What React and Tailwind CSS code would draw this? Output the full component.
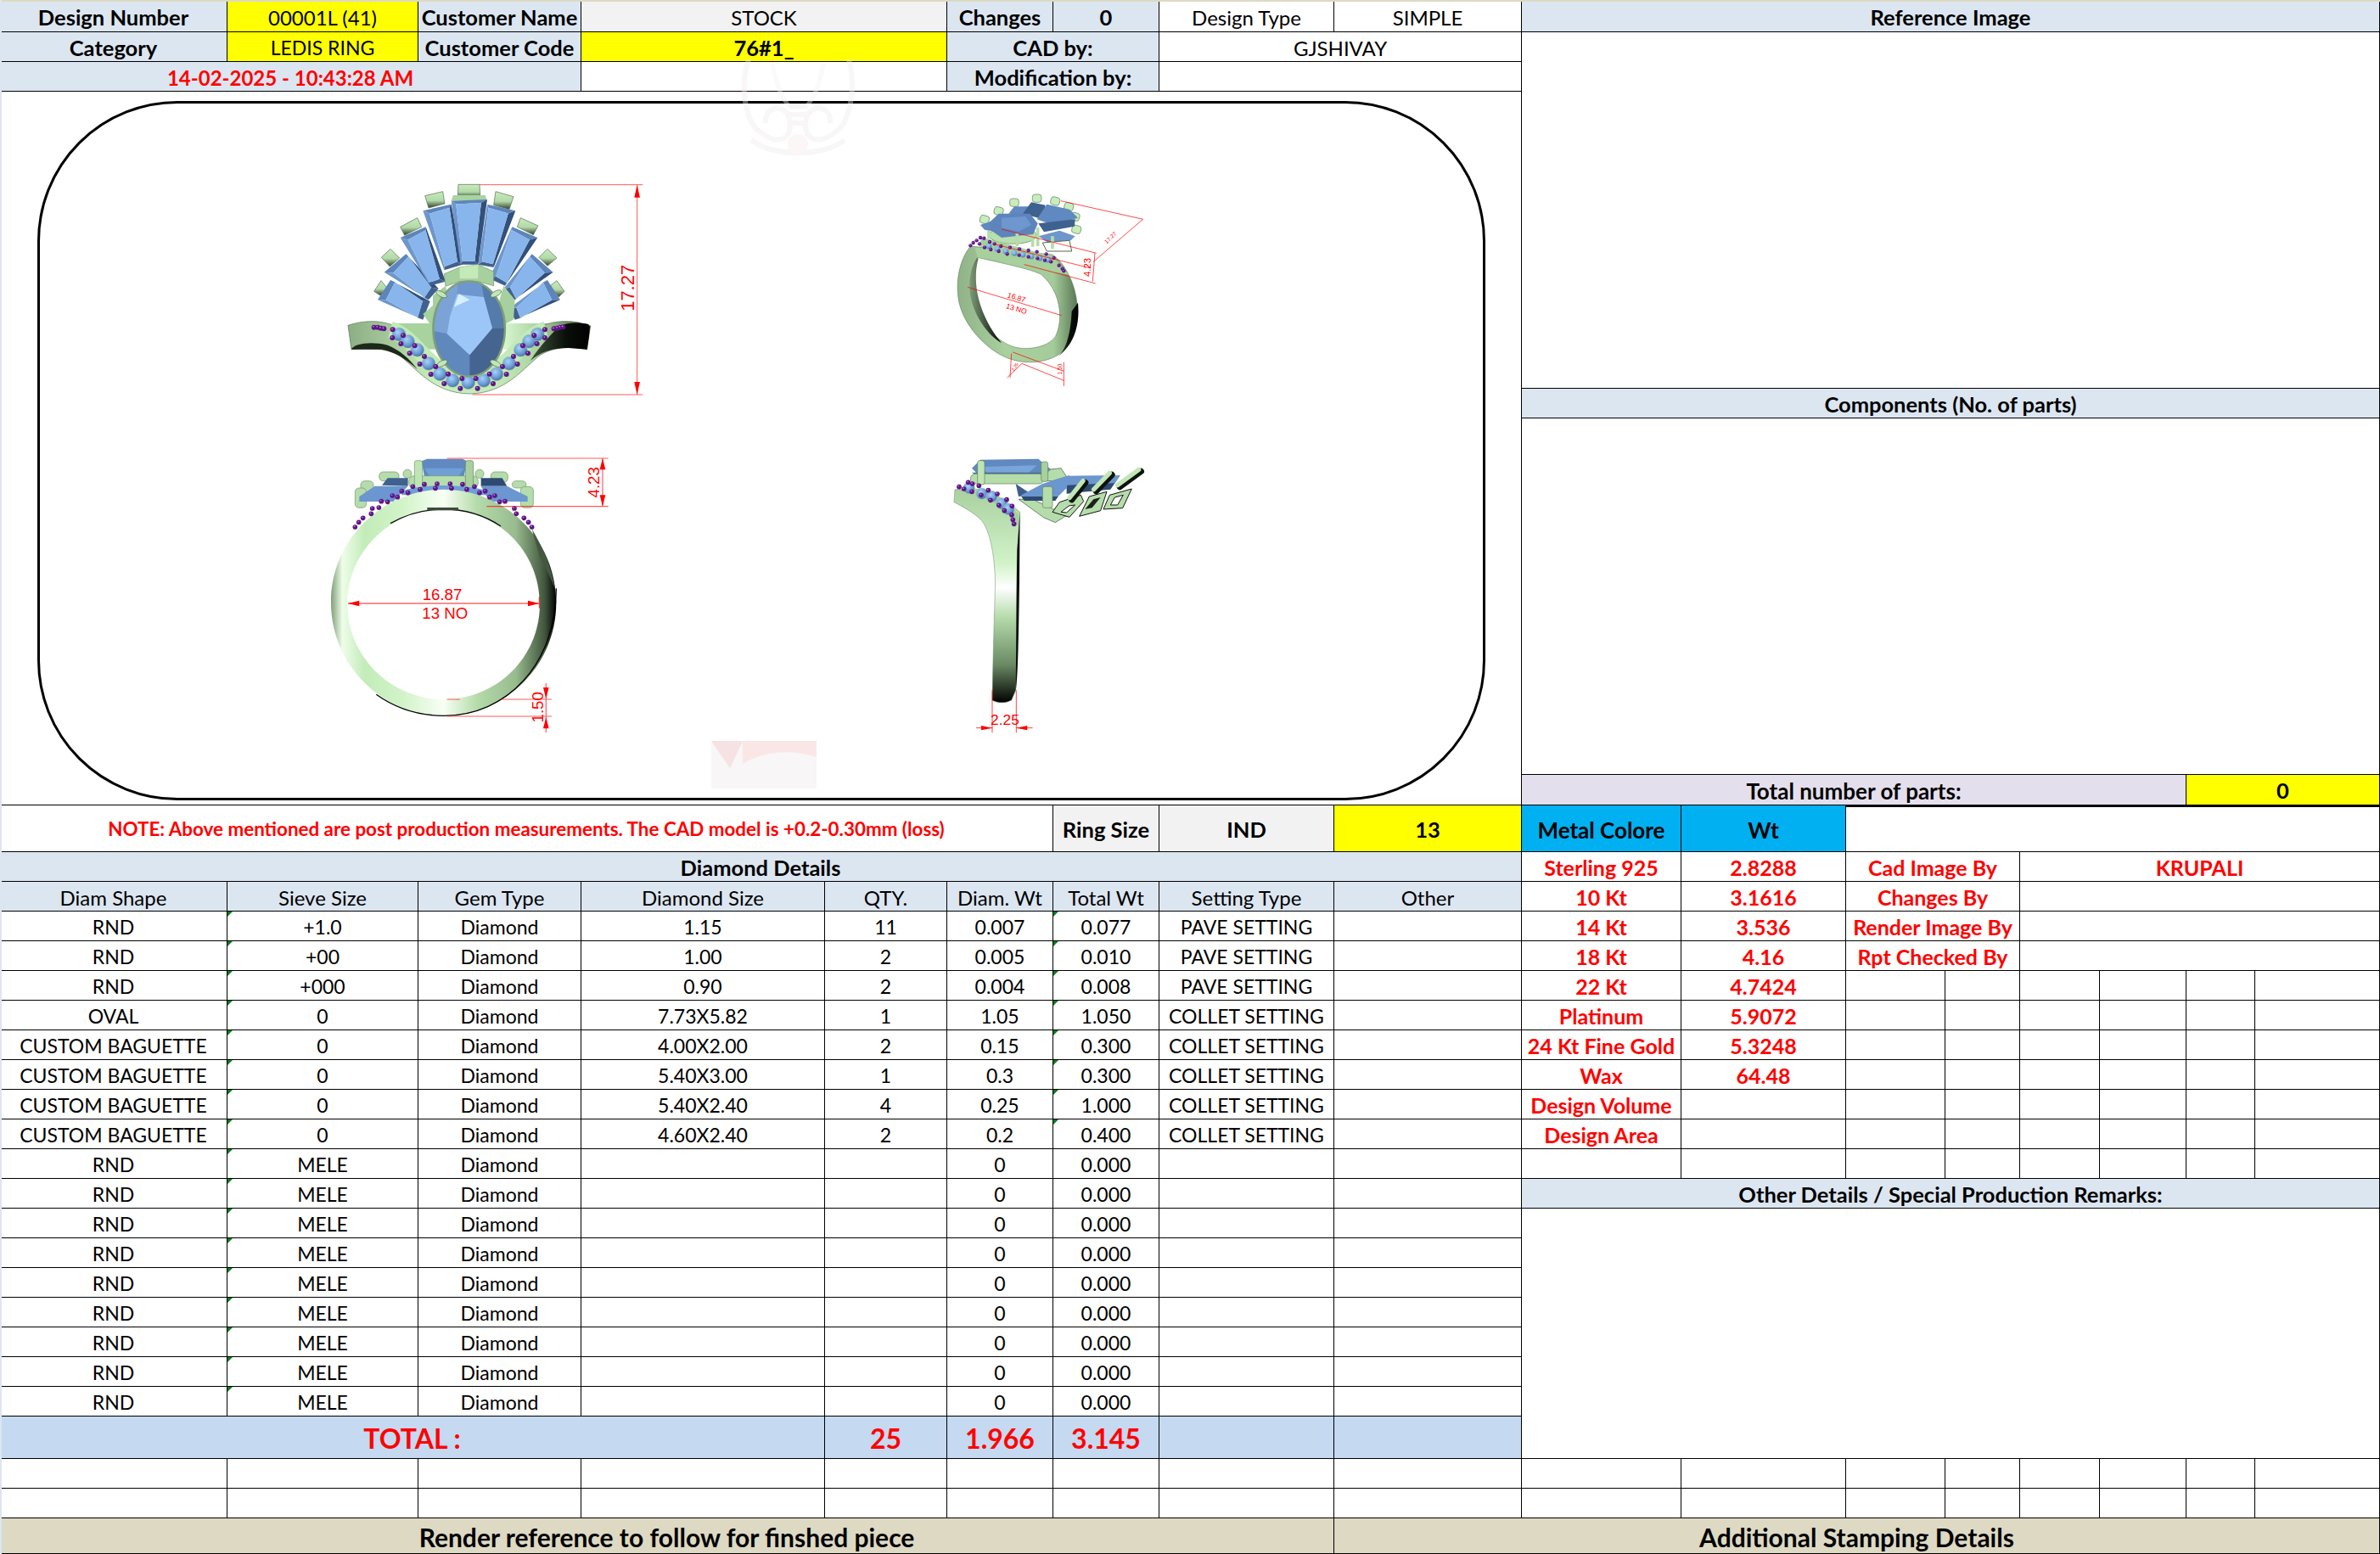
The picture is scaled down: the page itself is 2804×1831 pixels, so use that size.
import React from "react";

const RED = "#ff0000";

function Cell({ c = "", children }) {
  return (
    <div className={`relative flex items-center justify-center pt-[3px] border-r border-b border-black whitespace-nowrap overflow-hidden ${c}`}>
      {children}
    </div>
  );
}

const Tick = () => (
  <span className="absolute left-0 top-0 w-[6px] h-[6px] bg-[#0b7d1e] [clip-path:polygon(0_0,100%_0,0_100%)]" />
);

const rows = [
  ["RND", "+1.0", "1.15", "11", "0.007", "0.077", "PAVE SETTING"],
  ["RND", "+00", "1.00", "2", "0.005", "0.010", "PAVE SETTING"],
  ["RND", "+000", "0.90", "2", "0.004", "0.008", "PAVE SETTING"],
  ["OVAL", "0", "7.73X5.82", "1", "1.05", "1.050", "COLLET SETTING"],
  ["CUSTOM BAGUETTE", "0", "4.00X2.00", "2", "0.15", "0.300", "COLLET SETTING"],
  ["CUSTOM BAGUETTE", "0", "5.40X3.00", "1", "0.3", "0.300", "COLLET SETTING"],
  ["CUSTOM BAGUETTE", "0", "5.40X2.40", "4", "0.25", "1.000", "COLLET SETTING"],
  ["CUSTOM BAGUETTE", "0", "4.60X2.40", "2", "0.2", "0.400", "COLLET SETTING"],
  ...Array.from({ length: 9 }, () => ["RND", "MELE", "", "", "0", "0.000", ""]),
];

const metals = [
  ["Sterling 925", "2.8288", "Cad Image By", "KRUPALI"],
  ["10 Kt", "3.1616", "Changes By", ""],
  ["14 Kt", "3.536", "Render Image By", ""],
  ["18 Kt", "4.16", "Rpt Checked By", ""],
  ["22 Kt", "4.7424"],
  ["Platinum", "5.9072"],
  ["24 Kt Fine Gold", "5.3248"],
  ["Wax", "64.48"],
  ["Design Volume", ""],
  ["Design Area", ""],
  ["", ""],
];

const redB = "font-bold text-[25px] text-[#ff0000]";
const bold = "font-bold text-[25.5px]";
const blue = "bg-[#dce6f1]";
const data = "text-[23px]";

function RightRow({ m }) {
  return (
    <>
      <Cell c={redB}>{m[0]}</Cell>
      <Cell c={redB}>{m[1]}</Cell>
      {m.length > 2 ? (
        <>
          <Cell c={`col-span-2 ${redB}`}>{m[2]}</Cell>
          <Cell c={`col-span-4 ${redB}`}>{m[3]}</Cell>
        </>
      ) : (
        <>
          <Cell /><Cell /><Cell /><Cell /><Cell /><Cell />
        </>
      )}
    </>
  );
}

/* ---------- drawing helpers ---------- */
const pts = (a) => a.map((p) => p.join(",")).join(" ");
function Bag({ q, k = 0.3, dx = 0 }) {
  const cx = q.reduce((s, p) => s + p[0], 0) / 4 + dx;
  const cy = q.reduce((s, p) => s + p[1], 0) / 4;
  const t = q.map(([x, y]) => [x + (cx - x) * k, y + (cy - y) * k * 0.35]);
  const face = (i, j, f) => <polygon points={pts([q[i], q[j], t[j], t[i]])} fill={f} />;
  return (
    <g>
      {face(0, 1, "#5d85bb")}
      {face(1, 2, "#33507a")}
      {face(2, 3, "#3f618f")}
      {face(3, 0, "#6d97cc")}
      <polygon points={pts(t)} fill="#87b5ec" />
    </g>
  );
}
function Dots({ list, r = 9 }) {
  return list.map(([x, y], i) => (
    <g key={i}>
      <circle cx={x} cy={y} r={r} fill="#5e1587" />
      <circle cx={x - r * 0.25} cy={y - r * 0.3} r={r * 0.28} fill="#c58be0" />
    </g>
  ));
}
function Spheres({ list, r = 24 }) {
  return list.map(([x, y], i) => <circle key={i} cx={x} cy={y} r={r} fill="url(#sph)" stroke="#9fd0a0" strokeWidth="2" />);
}
const Tip = ({ p }) => <polygon points={pts(p)} fill="url(#tip)" stroke="#4d6b48" strokeWidth="2" />;
const Arrow = ({ p }) => <polygon points={pts(p)} fill={RED} />;
const L = ({ d, w = 3, o = 0.65 }) => <path d={d} stroke={RED} strokeOpacity={o} strokeWidth={w} fill="none" />;
const T = ({ x, y, s, r, children }) => (
  <text x={x} y={y} fontSize={s} fill={RED} textAnchor="middle" fontFamily="Liberation Sans, sans-serif" transform={r ? `rotate(${r} ${x} ${y})` : undefined}>
    {children}
  </text>
);

function Ring1() {
  return (
    <g transform="translate(350 180) scale(0.3333)">
      <rect x="340" y="603" width="150" height="92" fill="#a8d29e" />
      <rect x="730" y="603" width="170" height="92" fill="url(#r1back)" />
      <path d="M180 610 C240 590 310 590 360 620 C430 665 470 760 540 780 L680 780 C740 760 790 660 860 615 C910 590 980 590 1037 612 L1025 695 C960 680 900 690 860 715 C800 760 740 850 610 852 C480 850 420 760 360 715 C310 690 260 690 192 695 Z" fill="url(#r1band)" stroke="#55714f" strokeWidth="2" />
      <path d="M192 695 C200 675 260 665 320 680 C360 695 400 730 425 765 C385 730 350 705 300 695 Z" fill="#1c281a" />
      <path d="M1025 695 C1032 650 1037 620 1030 606 C990 598 950 600 925 615 C900 640 860 680 825 735 C860 705 900 690 960 690 Z" fill="url(#r1dark)" />
      <path d="M330 625 C420 650 470 790 605 815 C740 790 790 650 880 625" stroke="#c3eab8" strokeWidth="58" fill="none" />
      <Spheres list={[[360,642],[392,667],[425,697],[465,745],[505,782],[550,805],[605,812],[660,805],[705,782],[750,745],[790,697],[820,667],[850,642]]} />
      {[[[570,112],[645,112],[648,160],[568,160]],[[452,152],[515,137],[522,180],[465,195]],[[702,137],[765,155],[750,200],[695,185]],[[365,262],[425,230],[440,262],[380,292]],[[790,230],[852,258],[835,290],[778,262]],[[298,370],[330,340],[362,372],[328,402]],[[885,340],[918,372],[885,400],[855,370]],[[272,490],[297,452],[320,480],[295,505]],[[918,452],[945,490],[925,510],[895,470]]].map((p, i) => <Tip key={i} p={p} />)}
      <polygon points="552,150 665,150 672,170 545,170" fill="#a9d3a0" />
      <Bag q={[[885,450],[930,520],[770,590],[750,550]]} />
      <Bag q={[[285,520],[330,450],[470,525],[445,590]]} />
      <Bag q={[[830,358],[905,422],[760,525],[730,480]]} />
      <Bag q={[[308,422],[385,358],[500,480],[465,520]]} />
      <Bag q={[[760,262],[850,300],[735,470],[680,445]]} />
      <Bag q={[[365,300],[455,262],[525,455],[470,470]]} />
      <Bag q={[[672,182],[772,205],[695,405],[640,395]]} dx={-8} />
      <Bag q={[[445,205],[545,182],[585,395],[520,415]]} />
      <Bag q={[[545,170],[672,165],[640,395],[578,395]]} dx={-8} />
      <path d="M520 428 L575 405 L640 395 L695 420 L695 470 L640 455 L575 455 L525 472 Z" fill="#a6d09d" stroke="#6f9168" strokeWidth="2" />
      <path d="M575 405 L640 395 L640 445 L575 445 Z" fill="#c4eaba" />
      <polygon points="480,505 525,470 540,540 490,600 470,605 445,570 480,540" fill="#a6d09d" />
      <polygon points="730,470 770,520 765,590 735,605 710,540" fill="#a6d09d" />
      <g>
        <clipPath id="ov"><ellipse cx="608" cy="622" rx="127" ry="168" /></clipPath>
        <ellipse cx="608" cy="622" rx="127" ry="168" fill="#6f97cb" />
        <g clipPath="url(#ov)">
          <polygon points="570,450 565,500 660,510 650,450" fill="#6f97cf" />
          <polygon points="565,500 540,580 530,640 480,630 505,510 570,450" fill="#7ba3d6" />
          <polygon points="660,510 690,620 740,620 725,520 650,450" fill="#547baa" />
          <polygon points="530,640 480,630 515,770 610,795 610,715" fill="#5f88bd" />
          <polygon points="690,620 740,620 715,770 610,795 610,715" fill="#45648f" />
          <polygon points="540,580 565,500 660,510 690,620 610,715 530,640" fill="#9cc6f7" />
          <polygon points="555,545 572,498 610,520" fill="#d6f0ff" />
        </g>
        <ellipse cx="608" cy="622" rx="127" ry="168" fill="none" stroke="#7f9f78" strokeWidth="7" />
      </g>
      {[[510,500,28],[703,498,-28],[512,745,-28],[702,745,28]].map(([x, y, r], i) => (
        <ellipse key={i} cx={x} cy={y} rx="21" ry="9" fill="#c2e6b8" stroke="#55714f" strokeWidth="2" transform={`rotate(${r} ${x} ${y})`} />
      ))}
      <Dots list={[[272,617],[285,617],[296,620],[307,622],[338,625],[337,654],[375,646],[367,675],[416,682],[398,709],[450,720],[434,747],[490,756],[473,783],[534,782],[520,816],[583,798],[577,833],[632,798],[638,833],[680,782],[693,816],[726,756],[740,783],[765,720],[779,747],[798,682],[816,709],[838,646],[848,675],[876,625],[876,654],[908,622],[920,620],[930,617],[940,616]]} />
      <L d="M645 113 H1222 M620 855 H1222 M1202 113 V855" />
      <Arrow p={[[1202,113],[1192,158],[1212,158]]} />
      <Arrow p={[[1202,855],[1192,810],[1212,810]]} />
      <T x="1190" y="478" s="66" r="-90">17.27</T>
    </g>
  );
}

function Ring2() {
  return (
    <g transform="translate(1080 200) scale(0.3333)">
      <path fillRule="evenodd" d="M190 270 C150 320 135 400 150 470 C170 560 260 650 340 672 C400 690 480 680 525 635 C575 585 580 480 550 400 C535 360 510 320 480 300 Z M215 310 C195 340 185 390 195 450 C210 530 280 610 350 628 C410 640 470 620 490 590 C520 530 510 430 440 370 C400 350 300 330 215 310 Z" fill="url(#r2band)" stroke="#4f6c4a" strokeWidth="1.5" />
      <path d="M215 310 C192 340 180 400 192 455 C205 515 250 585 300 612 C255 560 215 480 210 400 C208 360 212 335 218 315 Z" fill="url(#r2in)" />
      <path d="M570 470 C578 550 555 620 495 664 C530 640 545 570 548 500 Z" fill="url(#r1dark)" />
      <path d="M205 275 C280 280 420 290 490 320 L540 372 L380 335 L215 310 Z" fill="#a7d09d" />
      {[[345,115],[425,100],[490,110],[538,130],[560,165],[565,210],[290,145],[240,175]].map(([x, y], i) => (
        <rect key={i} x={x - 16} y={y - 13} width="32" height="28" rx="9" fill="#c7ecbd" stroke="#5f7f59" strokeWidth="2" transform={`rotate(${i > 1 ? 15 : 0} ${x} ${y})`} />
      ))}
      <polygon points="325,155 345,130 395,130 385,160" fill="#5f89c0" />
      <polygon points="375,155 405,115 455,125 445,175" fill="#3f618f" />
      <polygon points="425,175 460,122 540,140 570,170 480,195" fill="#5f89c0" />
      <polygon points="430,190 560,175 558,200 450,220" fill="#3f618f" />
      <polygon points="430,235 505,215 560,235 545,250 470,262" fill="#6d97cc" />
      <polygon points="445,258 540,250 548,288 460,288" fill="#ffffff" stroke="#4d6b48" strokeWidth="3" />
      <polygon points="225,195 262,182 272,218 240,212" fill="#5f89c0" />
      <ellipse cx="340" cy="232" rx="84" ry="30" fill="#b8e0ae" stroke="#5f7f59" strokeWidth="2" />
      <polygon points="258,185 290,155 400,155 428,190 412,228 300,240 262,214" fill="#5d85bb" />
      <polygon points="300,170 385,165 405,195 360,218 300,205" fill="#6f97cf" />
      <path d="M355 225 V270 M428 205 V270 M255 215 V245 M410 235 V272 M480 235 V280" stroke="#b5dcab" strokeWidth="11" />
      <path d="M225 255 L480 322" stroke="#a4d0a0" strokeWidth="32" />
      <Spheres r={11} list={[[255,270],[285,280],[315,288],[345,295],[375,300],[405,306],[435,312],[465,318]]} />
      <Dots r={6.5} list={[[190,268],[200,258],[212,250],[225,240],[238,242],[222,262],[240,275],[258,255],[275,262],[262,282],[298,270],[290,288],[330,275],[320,298],[363,280],[362,302],[395,285],[395,308],[425,290],[427,313],[458,298],[453,320],[485,312],[475,325],[503,338],[515,350],[520,358]]} />
      <L o={0.85} w={2.5} d="M510 110 L800 175 M800 175 L625 325 M300 210 L635 295 M630 295 L622 395 M270 262 L615 348 M380 335 L632 402 M180 415 L512 515 M340 645 L520 712 M335 650 L330 735 M320 735 L372 685 M372 685 L520 745 M520 680 V765" />
      <T x="350" y="460" s="26" r="17">16.87</T>
      <T x="350" y="500" s="26" r="17">13 NO</T>
      <T x="690" y="245" s="20" r="-45">17.27</T>
      <T x="615" y="345" s="34" r="-90">4.23</T>
      <T x="512" y="705" s="20" r="-90">1.50</T>
      <T x="352" y="700" s="16" r="-60">2.25</T>
    </g>
  );
}

function Ring3() {
  return (
    <g transform="translate(360 520) scale(0.3333)">
      {[[260,108,330,140],[195,140,240,180],[175,165,215,235],[655,108,715,145],[730,140,780,165],[760,160,805,235],[345,100,375,130],[600,100,630,130]].map(([a, b, c, d], i) => (
        <rect key={i} x={a} y={b} width={c - a} height={d - b} rx="14" fill="#b5dcab" stroke="#6f9168" strokeWidth="2" />
      ))}
      <polygon points="270,155 290,130 362,130 362,158" fill="#3f618f" />
      <polygon points="620,130 695,130 712,158 620,158" fill="#2e4a72" />
      <polygon points="190,195 245,158 362,158 310,213 190,213" fill="#6b96cf" />
      <polygon points="620,158 712,158 785,195 785,213 650,213" fill="#6b96cf" />
      <polygon points="410,70 430,62 555,62 570,70 560,125 420,125" fill="#5f89c0" />
      <polygon points="420,95 560,95 540,125 440,125" fill="#6f9fd6" />
      <rect x="365" y="122" width="245" height="45" rx="20" fill="#b6deac" stroke="#6f9168" strokeWidth="2" />
      <rect x="385" y="68" width="28" height="98" rx="8" fill="#bfe5b5" stroke="#6f9168" strokeWidth="2" />
      <rect x="565" y="68" width="28" height="98" rx="8" fill="#a7d09d" stroke="#5f7f59" strokeWidth="2" />
      <path d="M340 175 C420 150 560 150 640 175 L640 190 L340 190 Z" fill="#6f9fd6" />
      <path fillRule="evenodd" d="M90 570 C90 340 280 170 488 170 C700 170 886 340 886 570 C886 790 710 970 488 970 C270 970 90 790 90 570 Z M148 575 C148 760 300 912 488 912 C680 912 828 760 828 575 C828 390 680 240 488 240 C300 240 148 390 148 575 Z" fill="url(#r3band)" />
      <path d="M886 520 C886 790 710 970 488 970 C400 970 320 945 250 895" stroke="#000" strokeWidth="4" fill="none" />
      <path d="M300 290 C370 250 430 240 488 240 C560 240 630 260 690 300" stroke="#111" strokeWidth="4" fill="none" />
      <rect x="430" y="234" width="110" height="10" fill="#3b4d38" />
      <path d="M800 310 C835 370 865 430 882 520 C865 480 845 440 828 410 Z" fill="#44583f" />
      <Dots r={8.5} list={[[175,303],[188,286],[203,271],[232,256],[236,237],[259,234],[268,212],[290,214],[307,192],[325,197],[340,176],[362,182],[379,160],[405,170],[420,152],[459,166],[465,150],[511,150],[516,166],[555,152],[570,170],[597,160],[615,182],[635,176],[651,197],[669,192],[686,214],[705,212],[738,237],[745,256],[772,271],[788,286],[800,303]]} />
      <L w={3.5} d="M500 60 H1070 M640 230 H1070 M1050 60 V230 M500 912 H545 M690 912 H870 M500 972 H870 M850 855 V1030" />
      <L o={0.9} w={3} d="M150 573 H826 M826 550 V590" />
      <Arrow p={[[150,573],[190,563],[190,583]]} />
      <Arrow p={[[826,573],[786,563],[786,583]]} />
      <Arrow p={[[1050,60],[1040,100],[1060,100]]} />
      <Arrow p={[[1050,230],[1040,190],[1060,190]]} />
      <Arrow p={[[850,910],[840,870],[860,870]]} />
      <Arrow p={[[850,975],[840,1015],[860,1015]]} />
      <T x="483" y="562" s="56">16.87</T>
      <T x="493" y="627" s="56">13 NO</T>
      <T x="1038" y="145" s="56" r="-90">4.23</T>
      <T x="840" y="940" s="56" r="-90">1.50</T>
    </g>
  );
}

function Ring4() {
  return (
    <g transform="translate(1100 520) scale(0.3333)">
      {/* lower cage of the fan */}
      <polygon points="300,205 350,205 470,262 430,287 390,270" fill="#b5dcab" stroke="#3e523a" strokeWidth="2" />
      <polygon points="420,250 445,215 520,190 530,212 480,268" fill="#b5dcab" stroke="#10160f" strokeWidth="3" />
      <polygon points="450,250 478,228 500,225 470,252" fill="#ffffff" stroke="#10160f" strokeWidth="3" />
      <polygon points="515,265 550,195 612,178 590,245" fill="#b5dcab" stroke="#10160f" strokeWidth="3" />
      <polygon points="535,240 565,205 590,198 560,235" fill="#1a2418" />
      <polygon points="600,240 622,190 700,168 668,236" fill="#b5dcab" stroke="#10160f" strokeWidth="3" />
      <polygon points="625,225 640,198 670,190 650,225" fill="#ffffff" stroke="#10160f" strokeWidth="3" />
      <polygon points="362,115 400,100 450,95 470,125 420,140 375,140" fill="#b5dcab" stroke="#3e523a" strokeWidth="2" />
      {/* blue upper stones */}
      <polygon points="470,122 660,120 640,150 540,155 470,168" fill="#6b96cf" />
      <polygon points="470,155 640,148 625,170 470,185" fill="#2e4a72" />
      {/* diagonal prongs */}
      {[[480,200,528,140],[566,170,622,112],[650,155,725,100]].map(([a, b, c, d], i) => (
        <g key={i}>
          <path d={`M${a + 8} ${b + 6} L${c + 8} ${d + 6}`} stroke="#0d130c" strokeWidth="22" strokeLinecap="round" />
          <path d={`M${a} ${b} L${c} ${d}`} stroke="#c0e6b5" strokeWidth="16" strokeLinecap="round" />
        </g>
      ))}
      {/* oval */}
      <polygon points="135,95 165,65 370,62 415,100 365,140 170,130" fill="#5f89c0" />
      <polygon points="165,90 365,85 320,125 205,125" fill="#7aa5da" />
      <polygon points="135,110 405,110 370,150 180,140" fill="#496c9e" />
      <polygon points="290,150 350,190 300,195" fill="#3e5f8d" />
      <rect x="130" y="115" width="260" height="35" rx="17" fill="#b5dcab" stroke="#5f7f59" strokeWidth="2" />
      <rect x="155" y="68" width="25" height="85" rx="8" fill="#bfe5b5" stroke="#5f7f59" strokeWidth="2" />
      <rect x="380" y="72" width="24" height="70" rx="8" fill="#a7d09d" stroke="#5f7f59" strokeWidth="2" />
      <polygon points="310,190 385,150 480,120 470,165 430,205 320,205" fill="#6b96cf" />
      <polygon points="310,195 440,195 430,210 320,210" fill="#2e4a72" />
      <rect x="385" y="160" width="35" height="75" rx="8" fill="#b5dcab" stroke="#5f7f59" strokeWidth="2" />
      {/* shank */}
      <path d="M72 215 L75 170 C150 170 240 190 305 250 L295 400 C292 600 295 800 290 880 L275 915 C250 928 225 925 207 915 C210 750 215 600 218 500 C215 400 200 320 170 280 C140 250 100 230 72 215 Z" fill="url(#r4band)" stroke="#6a8a64" strokeWidth="1.5" />
      <path d="M295 385 L305 250 L303 500 C300 700 298 830 290 882 C292 700 293 520 295 385 Z" fill="#0a0f0a" />
      <path d="M130 165 C200 170 260 200 300 260 L300 300 C250 230 180 190 95 170 Z" fill="#a4d0a0" />
      <Spheres r={20} list={[[125,165],[170,185],[205,195],[240,220],[265,240]]} />
      <Dots r={8.5} list={[[90,161],[107,168],[122,145],[137,150],[160,157],[135,178],[168,190],[193,173],[201,208],[225,186],[258,206],[231,226],[277,229],[250,245],[276,260],[280,277],[284,292]]} />
      <L o={0.75} d="M207 880 V1030 M292 880 V1030 M150 1013 H208 M292 1013 H350" />
      <Arrow p={[[207,1013],[168,1005],[168,1021]]} />
      <Arrow p={[[292,1013],[331,1005],[331,1021]]} />
      <T x="252" y="1003" s="52">2.25</T>
    </g>
  );
}

function Drawing() {
  return (
    <svg className="absolute inset-0" width="1793" height="841" viewBox="0 108 1793 841">
      <defs>
        <linearGradient id="tip" x1="0" x2="0" y1="0" y2="1"><stop offset="0" stopColor="#c8ebbd" /><stop offset="0.55" stopColor="#b2d9a8" /><stop offset="1" stopColor="#2f3d2c" /></linearGradient>
        <linearGradient id="r1band" x1="180" x2="1037" y1="0" y2="0" gradientUnits="userSpaceOnUse">
          <stop offset="0" stopColor="#8dae84" /><stop offset="0.2" stopColor="#a9cd9f" /><stop offset="0.36" stopColor="#c9f0bf" />
          <stop offset="0.62" stopColor="#c3eab8" /><stop offset="0.8" stopColor="#a8cf9e" /><stop offset="0.93" stopColor="#5f7a59" /><stop offset="1" stopColor="#111" />
        </linearGradient>
        <linearGradient id="r1back" x1="0" x2="1" y1="0" y2="0"><stop offset="0" stopColor="#d7f6cf" /><stop offset="1" stopColor="#9bc491" /></linearGradient>
        <linearGradient id="r1dark" x1="0" x2="1" y1="0" y2="0"><stop offset="0" stopColor="#3f553b" /><stop offset="0.6" stopColor="#0a0f0a" /><stop offset="1" stopColor="#000" /></linearGradient>
        <radialGradient id="sph" cx="0.4" cy="0.35" r="0.7"><stop offset="0" stopColor="#a8d2fa" /><stop offset="0.6" stopColor="#6a9cd4" /><stop offset="1" stopColor="#44699a" /></radialGradient>
        <linearGradient id="r2band" x1="140" x2="580" y1="0" y2="0" gradientUnits="userSpaceOnUse"><stop offset="0" stopColor="#8fb286" /><stop offset="0.4" stopColor="#a9d09f" /><stop offset="0.78" stopColor="#a4cc9a" /><stop offset="1" stopColor="#4f6a4a" /></linearGradient>
        <linearGradient id="r2in" x1="0" x2="1" y1="0" y2="0"><stop offset="0" stopColor="#7d9c76" /><stop offset="1" stopColor="#040604" /></linearGradient>
        <linearGradient id="r3band" x1="90" x2="886" y1="0" y2="0" gradientUnits="userSpaceOnUse">
          <stop offset="0" stopColor="#7f9f78" /><stop offset="0.05" stopColor="#eefde9" /><stop offset="0.15" stopColor="#c3ecb9" /><stop offset="0.32" stopColor="#d2f3c9" />
          <stop offset="0.5" stopColor="#f8fff5" /><stop offset="0.65" stopColor="#b4dba9" /><stop offset="0.82" stopColor="#98bb8f" /><stop offset="0.95" stopColor="#40553c" /><stop offset="1" stopColor="#000" />
        </linearGradient>
        <linearGradient id="r4band" x1="0" x2="0" y1="170" y2="925" gradientUnits="userSpaceOnUse">
          <stop offset="0" stopColor="#a9d09f" /><stop offset="0.35" stopColor="#d2f3c9" /><stop offset="0.46" stopColor="#ffffff" /><stop offset="0.6" stopColor="#b4dba9" /><stop offset="0.82" stopColor="#6a8a64" /><stop offset="1" stopColor="#000" />
        </linearGradient>
      </defs>
      <g>
        <rect x="838" y="873" width="124" height="56" fill="#f8f6f6" />
        <path d="M875 873 H962 V892 C930 882 900 885 875 900 Z" fill="#fbe6e6" />
        <path d="M838 873 H875 L860 905 Z" fill="#f6e2e2" />
      </g>
      <Ring1 />
      <Ring2 />
      <Ring3 />
      <Ring4 />
    </svg>
  );
}

function Watermark() {
  return (
    <svg className="absolute left-[860px] top-[55px] pointer-events-none opacity-40" width="160" height="135" viewBox="0 0 160 135">
      <path d="M22 15 C10 50 20 90 35 100 C60 120 75 105 70 85 C65 65 40 70 42 90 M140 15 C150 50 140 90 125 100 C100 120 85 105 90 85 C95 65 120 70 118 90 M25 110 C50 130 110 130 135 110 M70 70 H92 M70 80 H92 M70 90 H92" fill="none" stroke="#efebeb" strokeWidth="6" />
      <path d="M50 20 C55 45 60 60 70 70 M110 20 C105 45 100 60 90 70" fill="none" stroke="#f3f1f6" strokeWidth="5" />
      <circle cx="80" cy="115" r="12" fill="#f7ecea" />
    </svg>
  );
}

export default function App() {
  return (
    <div className="relative w-[2804px] bg-white text-black text-[24px] leading-none font-['Lato','Liberation_Sans',sans-serif]">
      <div className="h-[2px] bg-[#ddd9c3]" />
      <div className="grid grid-cols-[268px_225px_192px_287px_144px_125px_125px_206px_221px_188px_194px_117px_88px_94px_102px_81px_147px] grid-rows-[36px_35px_35px_350px_35px_420px_36px_55px_repeat(19,35px)_50px_35px_35px_42px]">
        {/* row 1 */}
        <Cell c={`${bold} ${blue}`}>Design Number</Cell>
        <Cell c="bg-[#ffff00]">00001L (41)</Cell>
        <Cell c={`${bold} ${blue}`}>Customer Name</Cell>
        <Cell c="col-span-2 bg-[#f2f2f2]">STOCK</Cell>
        <Cell c={`${bold} ${blue}`}>Changes</Cell>
        <Cell c={`${bold} ${blue}`}>0</Cell>
        <Cell>Design Type</Cell>
        <Cell>SIMPLE</Cell>
        <Cell c={`col-span-8 ${bold} ${blue}`}>Reference Image</Cell>
        {/* row 2 */}
        <Cell c={`${bold} ${blue}`}>Category</Cell>
        <Cell c="bg-[#ffff00] text-[23px]">LEDIS RING</Cell>
        <Cell c={`${bold} ${blue}`}>Customer Code</Cell>
        <Cell c={`col-span-2 bg-[#ffff00] ${bold}`}>76#1_</Cell>
        <Cell c={`col-span-2 ${bold} ${blue}`}>CAD by:</Cell>
        <Cell c="col-span-2">GJSHIVAY</Cell>
        <Cell c="col-span-8 row-span-3" />
        {/* row 3 */}
        <Cell c={`col-span-3 font-bold text-[#ff0000] ${blue}`}>14-02-2025 - 10:43:28 AM</Cell>
        <Cell c="col-span-2" />
        <Cell c={`col-span-2 ${bold} ${blue}`}>Modification by:</Cell>
        <Cell c="col-span-2" />
        {/* picture */}
        <div className="col-span-9 row-span-4 relative border-r border-b border-black pl-[44px] pr-[42px] pt-[11px] pb-[5px]">
          <div className="h-full rounded-[165px] border-[3.5px] border-black" />
          <Drawing />
        </div>
        <Cell c={`col-span-8 ${bold} ${blue}`}>Components (No. of parts)</Cell>
        <Cell c="col-span-8" />
        <Cell c={`col-span-6 font-bold text-[26px] bg-[#e4dfec]`}>Total number of parts:</Cell>
        <Cell c={`col-span-2 ${bold} bg-[#ffff00]`}>0</Cell>
        {/* row 8 */}
        <Cell c="col-span-6 font-bold text-[#ff0000] text-[22.4px]">NOTE: Above mentioned are post production measurements. The CAD model is +0.2-0.30mm (loss)</Cell>
        <Cell c={`${bold} bg-[#f2f2f2]`}>Ring Size</Cell>
        <Cell c={`${bold} bg-[#f2f2f2]`}>IND</Cell>
        <Cell c={`${bold} bg-[#ffff00]`}>13</Cell>
        <Cell c="font-bold text-[26px] bg-[#00b0f0]">Metal Colore</Cell>
        <Cell c="font-bold text-[26px] bg-[#00b0f0]">Wt</Cell>
        <Cell c="col-span-6 border-t-2" />
        {/* Diamond details */}
        <Cell c={`col-span-9 ${bold} ${blue}`}>Diamond Details</Cell>
        <RightRow m={metals[0]} />
        {["Diam Shape", "Sieve Size", "Gem Type", "Diamond Size", "QTY.", "Diam. Wt", "Total Wt", "Setting Type", "Other"].map((h) => (
          <Cell key={h} c={blue}>{h}</Cell>
        ))}
        <RightRow m={metals[1]} />
        {rows.map((r, i) => (
          <React.Fragment key={i}>
            <Cell c={data}>{r[0]}</Cell>
            <Cell c={data}><Tick />{r[1]}</Cell>
            <Cell c={data}>Diamond</Cell>
            <Cell c={data}>{r[2]}</Cell>
            <Cell c={data}>{r[3]}</Cell>
            <Cell c={data}>{r[4]}</Cell>
            <Cell c={data}>{i < 8 ? <Tick /> : null}{r[5]}</Cell>
            <Cell c={data}>{r[6]}</Cell>
            <Cell />
            {i < 9 && <RightRow m={metals[i + 2]} />}
            {i === 9 && <Cell c={`col-span-8 ${bold} ${blue}`}>Other Details / Special Production Remarks:</Cell>}
            {i === 10 && <Cell c="col-span-8 row-span-8" />}
          </React.Fragment>
        ))}
        {/* total */}
        <Cell c="col-span-4 bg-[#c5d9f1] font-bold text-[#ff0000] text-[32px]">TOTAL :</Cell>
        <Cell c="bg-[#c5d9f1] font-bold text-[#ff0000] text-[32px]">25</Cell>
        <Cell c="bg-[#c5d9f1] font-bold text-[#ff0000] text-[32px]">1.966</Cell>
        <Cell c="bg-[#c5d9f1] font-bold text-[#ff0000] text-[32px]">3.145</Cell>
        <Cell c="bg-[#c5d9f1]" />
        <Cell c="bg-[#c5d9f1]" />
        {[0, 1].map((k) => (
          <React.Fragment key={k}>
            <Cell /><Cell /><Cell /><Cell /><Cell /><Cell /><Cell /><Cell /><Cell />
            <Cell /><Cell /><Cell /><Cell /><Cell /><Cell /><Cell /><Cell />
          </React.Fragment>
        ))}
        <Cell c="col-span-8 bg-[#ddd9c3] font-bold text-[30px]">Render reference to follow for finshed piece</Cell>
        <Cell c="col-span-9 bg-[#ddd9c3] font-bold text-[30px]">Additional Stamping Details</Cell>
      </div>
      <div className="absolute left-0 top-0 w-[2px] h-full bg-[#dce6f1]" />
      <Watermark />
    </div>
  );
}
